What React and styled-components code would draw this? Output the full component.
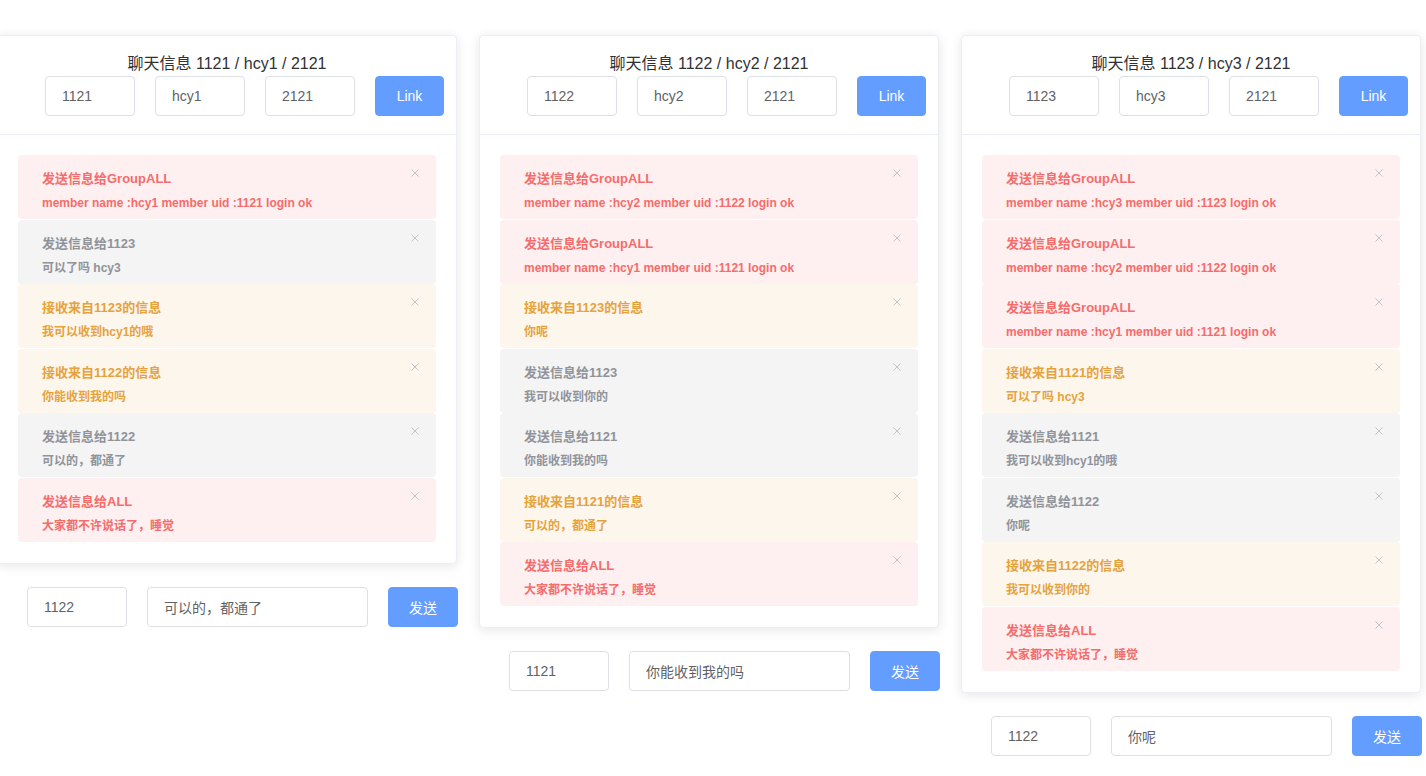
import React from "react";
import styled, { createGlobalStyle } from "styled-components";

const GlobalStyle = createGlobalStyle`
    html, body {
        margin: 0;
        padding: 0;
        background: #ffffff;
        overflow: hidden;
    }
    body {
        font-family: "Helvetica Neue", Helvetica, "Liberation Sans", "Noto Sans CJK SC", sans-serif;
        color: #303133;
    }
`;

const groupLogin = (name, uid) => ({
    type: "error",
    title: "发送信息给GroupALL",
    text: `member name :${name} member uid :${uid} login ok`,
});

const sleepAll = { type: "error", title: "发送信息给ALL", text: "大家都不许说话了，睡觉" };

const clients = [
    {
        uid: "1121",
        name: "hcy1",
        group: "2121",
        to: "1122",
        draft: "可以的，都通了",
        messages: [
            groupLogin("hcy1", "1121"),
            { type: "info", title: "发送信息给1123", text: "可以了吗 hcy3" },
            { type: "warning", title: "接收来自1123的信息", text: "我可以收到hcy1的哦" },
            { type: "warning", title: "接收来自1122的信息", text: "你能收到我的吗" },
            { type: "info", title: "发送信息给1122", text: "可以的，都通了" },
            sleepAll,
        ],
    },
    {
        uid: "1122",
        name: "hcy2",
        group: "2121",
        to: "1121",
        draft: "你能收到我的吗",
        messages: [
            groupLogin("hcy2", "1122"),
            groupLogin("hcy1", "1121"),
            { type: "warning", title: "接收来自1123的信息", text: "你呢" },
            { type: "info", title: "发送信息给1123", text: "我可以收到你的" },
            { type: "info", title: "发送信息给1121", text: "你能收到我的吗" },
            { type: "warning", title: "接收来自1121的信息", text: "可以的，都通了" },
            sleepAll,
        ],
    },
    {
        uid: "1123",
        name: "hcy3",
        group: "2121",
        to: "1122",
        draft: "你呢",
        messages: [
            groupLogin("hcy3", "1123"),
            groupLogin("hcy2", "1122"),
            groupLogin("hcy1", "1121"),
            { type: "warning", title: "接收来自1121的信息", text: "可以了吗 hcy3" },
            { type: "info", title: "发送信息给1121", text: "我可以收到hcy1的哦" },
            { type: "info", title: "发送信息给1122", text: "你呢" },
            { type: "warning", title: "接收来自1122的信息", text: "我可以收到你的" },
            sleepAll,
        ],
    },
];

const alertColors = {
    error: { bg: "#fef0f0", fg: "#f56c6c" },
    info: { bg: "#f4f4f5", fg: "#909399" },
    warning: { bg: "#fdf6ec", fg: "#e6a23c" },
};

function CloseIcon() {
    return (
        <CloseBox viewBox="0 0 8 8">
            <path d="M0.5 0.5 L7.5 7.5 M7.5 0.5 L0.5 7.5" stroke="#c0c4cc" strokeWidth="1" fill="none" />
        </CloseBox>
    );
}

function ChatClient({ client }) {
    return (
        <Column>
            <Card>
                <CardHeader>
                    <Title>聊天信息 {client.uid} / {client.name} / {client.group}</Title>
                    <LinkRow>
                        <TextInput $width={90} defaultValue={client.uid} />
                        <TextInput $width={90} defaultValue={client.name} />
                        <TextInput $width={90} defaultValue={client.group} />
                        <PrimaryButton $width={69}>Link</PrimaryButton>
                    </LinkRow>
                </CardHeader>
                <CardBody>
                    {client.messages.map((m, i) => (
                        <Alert key={i} $type={m.type}>
                            <AlertTitle>{m.title}</AlertTitle>
                            <AlertText>{m.text}</AlertText>
                            <CloseIcon />
                        </Alert>
                    ))}
                </CardBody>
            </Card>
            <SendRow>
                <TextInput $width={100} defaultValue={client.to} />
                <TextInput $width={221} defaultValue={client.draft} />
                <PrimaryButton $width={70}>发送</PrimaryButton>
            </SendRow>
        </Column>
    );
}

export default function App() {
    return (
        <>
            <GlobalStyle />
            <Page>
                {clients.map((c) => (
                    <ChatClient key={c.uid} client={c} />
                ))}
            </Page>
        </>
    );
}

const Page = styled.div`
    display: flex;
    flex-direction: row;
    align-items: flex-start;
    gap: 22px;

    margin-left: -3px;
    padding-top: 35px;
    width: 1424px;
`;

const Column = styled.div`
    display: flex;
    flex-direction: column;
    width: 460px;
    flex-shrink: 0;
`;

const Card = styled.div`
    background: #ffffff;
    border: 1px solid #ebeef5;
    border-radius: 4px;
    box-shadow: 0 2px 12px 0 rgba(0, 0, 0, 0.1);
    overflow: hidden;
`;

const CardHeader = styled.div`
    display: flex;
    flex-direction: column;
    align-items: stretch;
    padding: 17px 12px 18px 20px;
    border-bottom: 1px solid #ebeef5;
`;

const Title = styled.div`
    font-size: 16px;
    line-height: 22px;
    text-align: center;
    color: #303133;
    margin-bottom: 1px;
    margin-left: -8px;
`;

const LinkRow = styled.div`
    display: flex;
    flex-direction: row;
    justify-content: flex-end;
    gap: 20px;
`;

const TextInput = styled.input`
    box-sizing: border-box;
    width: ${(p) => p.$width}px;
    height: 40px;
    padding: 0 16px;
    border: 1px solid #dcdfe6;
    border-radius: 4px;
    background: #ffffff;
    outline: none;

    font-family: inherit;
    font-size: 14px;
    color: #606266;
`;

const PrimaryButton = styled.button`
    box-sizing: border-box;
    width: ${(p) => p.$width}px;
    height: 40px;
    padding: 0;
    border: 1px solid #629dff;
    border-radius: 4px;
    background: #629dff;

    font-family: inherit;
    font-size: 14px;
    color: #ffffff;
    cursor: pointer;
`;

const CardBody = styled.div`
    display: flex;
    flex-direction: column;
    gap: 0.5px;
    padding: 20px 20px 21px 20px;
`;

const Alert = styled.div`
    position: relative;
    box-sizing: border-box;
    height: 64px;
    padding: 15px 40px 0 24px;
    border-radius: 4px;
    background: ${(p) => alertColors[p.$type].bg};
    color: ${(p) => alertColors[p.$type].fg};
`;

const AlertTitle = styled.div`
    font-size: 13px;
    line-height: 18px;
    font-weight: 700;
`;

const AlertText = styled.div`
    margin-top: 6px;
    font-size: 12px;
    line-height: 18px;
    font-weight: 600;
`;

const CloseBox = styled.svg`
    position: absolute;
    top: 14px;
    right: 17px;
    width: 8px;
    height: 8px;
`;

const SendRow = styled.div`
    display: flex;
    flex-direction: row;
    justify-content: flex-end;
    gap: 20px;
    margin-top: 23px;
    margin-right: -1px;
`;
